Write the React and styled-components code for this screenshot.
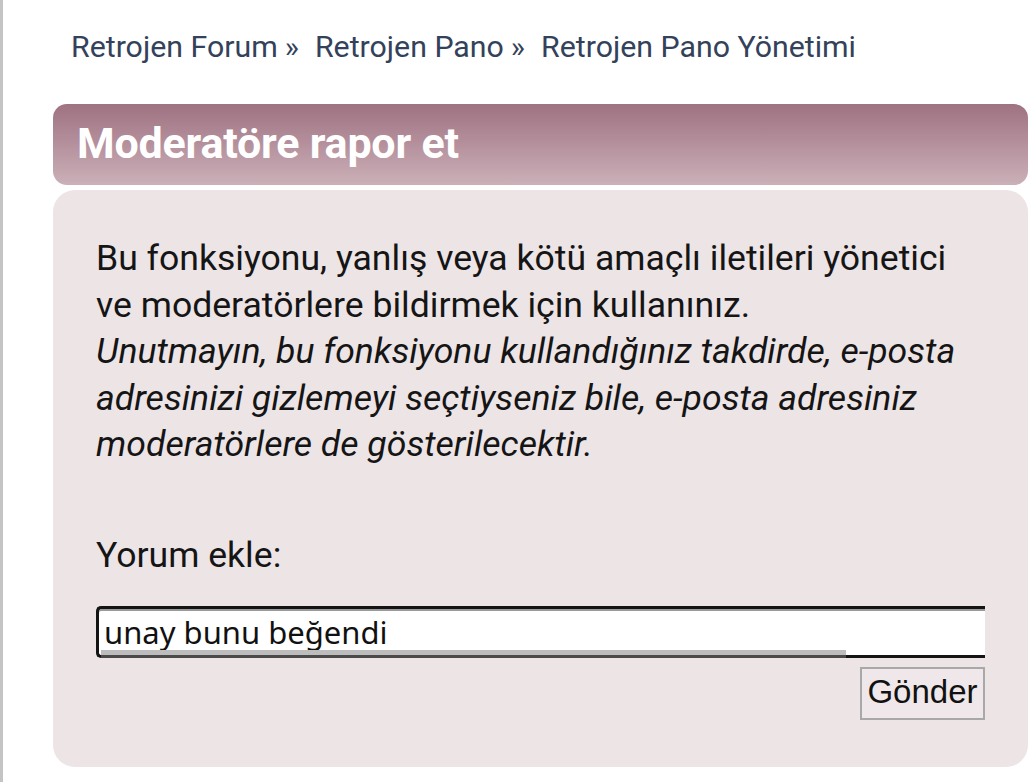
import React from 'react';
import styled, { createGlobalStyle } from 'styled-components';

const colors = {
  LINK: '#33425a',
  HEAD_TOP: '#9f7281',
  HEAD_BOTTOM: '#cbb0b8',
  PANEL: '#ede4e6',
  TEXT: '#151515',
  EDGE: '#c4c4c4',
};

const GlobalStyle = createGlobalStyle`
  html, body {
    margin: 0;
    padding: 0;
    background: #fff;
  }
  body {
    font-family: Roboto, "Liberation Sans", sans-serif;
  }
`;

const Page = styled.div`
  min-height: 782px;
  box-sizing: border-box;
  border-left: 3px solid ${colors.EDGE};
  padding: 0 0 0 50px;
  overflow: hidden;
`;

const Crumbs = styled.nav`
  display: flex;
  align-items: center;
  height: 92px;
  padding: 0 0 0 18px;
  box-sizing: border-box;
  font-size: 30.3px;
  color: ${colors.LINK};
  white-space: nowrap;
  a {
    color: ${colors.LINK};
    text-decoration: none;
  }
  .sep {
    margin: 0 16px 0 7px;
  }
`;

const Box = styled.section`
  margin-top: 12px;
  width: 975px;
`;

const Head = styled.h2`
  margin: 0;
  height: 81px;
  box-sizing: border-box;
  display: flex;
  align-items: center;
  padding: 0 24px 4px;
  border-radius: 14px;
  background: linear-gradient(${colors.HEAD_TOP} 0%, ${colors.HEAD_BOTTOM} 100%);
  color: #fff;
  font-size: 43px;
  font-weight: 700;
  letter-spacing: -0.2px;
`;

const Panel = styled.div`
  margin-top: 5px;
  background: ${colors.PANEL};
  border-radius: 22px;
  padding: 45px 43px 47px 43px;
  color: ${colors.TEXT};
  font-size: 35.6px;
  line-height: 46.5px;
`;

const Text = styled.p`
  margin: 0;
  em {
    display: block;
  }
`;

const Label = styled.label`
  display: block;
  margin-top: 64px;
`;

const Field = styled.div`
  position: relative;
  margin-top: 28px;
  height: 52px;
  box-sizing: border-box;
  border: 3px solid #141414;
  border-right: none;
  border-radius: 5px 0 0 5px;
  background: #fff;
  box-shadow: inset 0 2px 0 #9a9a9a;
  input {
    width: 100%;
    height: 100%;
    box-sizing: border-box;
    border: none;
    outline: none;
    background: none;
    padding: 0 0 3px 5px;
    font-family: "Noto Sans", "Open Sans", sans-serif;
    font-size: 31px;
    color: #111;
  }
`;

const Track = styled.span`
  position: absolute;
  left: 2px;
  bottom: 0;
  width: 745px;
  height: 5px;
  background: #bdbdbd;
  border-bottom: 3px solid #4a4a4a;
  margin-bottom: -3px;
`;

const Actions = styled.div`
  display: flex;
  justify-content: flex-end;
  margin-top: 9px;
`;

const Button = styled.button`
  height: 53px;
  width: 125px;
  box-sizing: border-box;
  border: 2px solid #a8a8a8;
  background: #efe7e9;
  font-family: "Liberation Sans", Arial, sans-serif;
  font-size: 33px;
  color: #111;
  padding: 0 0 3px;
  cursor: pointer;
`;

const App = () => (
  <Page>
    <GlobalStyle />
    <Crumbs>
      <a href="#forum">Retrojen Forum</a>
      <span className="sep">»</span>
      <a href="#pano">Retrojen Pano</a>
      <span className="sep">»</span>
      <a href="#yonetim">Retrojen Pano Yönetimi</a>
    </Crumbs>
    <Box>
      <Head>Moderatöre rapor et</Head>
      <Panel>
        <Text>
          Bu fonksiyonu, yanlış veya kötü amaçlı iletileri yönetici ve moderatörlere bildirmek için kullanınız.
          <em>
            Unutmayın, bu fonksiyonu kullandığınız takdirde, e-posta adresinizi gizlemeyi seçtiyseniz bile, e-posta adresiniz moderatörlere de gösterilecektir.
          </em>
        </Text>
        <Label htmlFor="comment">Yorum ekle:</Label>
        <Field>
          <input id="comment" type="text" defaultValue="unay bunu beğendi" />
          <Track />
        </Field>
        <Actions>
          <Button type="submit">Gönder</Button>
        </Actions>
      </Panel>
    </Box>
  </Page>
);

export default App;
